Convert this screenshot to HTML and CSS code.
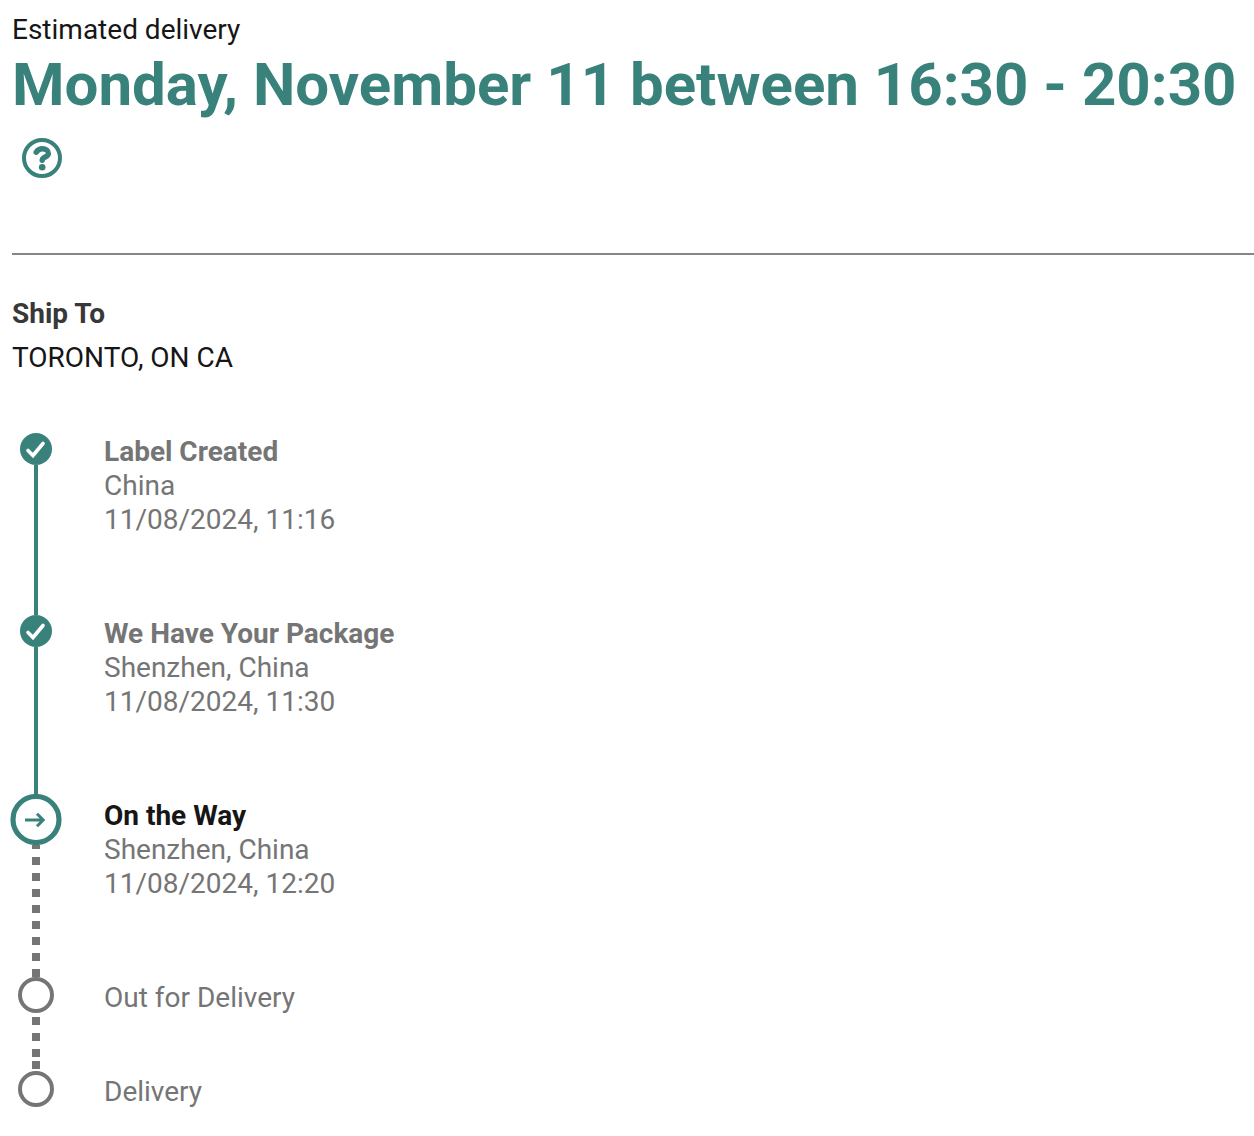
FILE: index.html
```html
<!DOCTYPE html>
<html lang="en">
<head>
<meta charset="utf-8">
<title>Delivery status</title>
<link rel="stylesheet" href="styles.css">
</head>
<body>
<main class="tracking">
  <header class="estimate">
    <p class="estimate-label">Estimated delivery</p>
    <h1 class="estimate-date">Monday, November 11 between 16:30 - 20:30</h1>
    <button class="help" type="button" aria-label="About the delivery estimate">
      <svg viewBox="0 0 40 40" width="40" height="40" aria-hidden="true">
        <circle cx="20" cy="20" r="18" fill="none" stroke="currentColor" stroke-width="4"/>
        <path d="M14.200 14.200C15.600 12 17.600 10.800 20.400 10.800C24 10.800 26.400 12.600 26.400 15.400C26.400 19.200 20.200 18.800 20.200 22.200" fill="none" stroke="currentColor" stroke-width="5.400" stroke-linecap="round"/>
        <circle cx="20.200" cy="29.200" r="3.300" fill="currentColor"/>
      </svg>
    </button>
  </header>
  <section class="ship-to">
    <h2 class="ship-to-title">Ship To</h2>
    <p class="ship-to-place">TORONTO, ON CA</p>
  </section>
  <ol class="steps">
    <li class="step done">
      <div class="rail">
        <svg class="marker" viewBox="0 0 32 32" width="32" height="32" aria-hidden="true"><circle cx="16" cy="16" r="16" fill="currentColor"/><path d="M8 17.500L13 22.500L23 10.500" fill="none" stroke="#fff" stroke-width="3.600" stroke-linecap="round"/></svg>
      </div>
      <div class="details"><h3 class="step-title">Label Created</h3><p>China</p><p>11/08/2024, 11:16</p></div>
    </li>
    <li class="step done">
      <div class="rail">
        <svg class="marker" viewBox="0 0 32 32" width="32" height="32" aria-hidden="true"><circle cx="16" cy="16" r="16" fill="currentColor"/><path d="M8 17.500L13 22.500L23 10.500" fill="none" stroke="#fff" stroke-width="3.600" stroke-linecap="round"/></svg>
      </div>
      <div class="details"><h3 class="step-title">We Have Your Package</h3><p>Shenzhen, China</p><p>11/08/2024, 11:30</p></div>
    </li>
    <li class="step current" aria-current="step">
      <div class="rail">
        <svg class="marker" viewBox="0 0 52 51" width="52" height="51" aria-hidden="true"><circle cx="26" cy="25.500" r="23" fill="#fff" stroke="currentColor" stroke-width="5.200"/><path d="M15 26H33M27 19.800L33.200 26L27 32.200" fill="none" stroke="currentColor" stroke-width="3"/></svg>
      </div>
      <div class="details"><h3 class="step-title">On the Way</h3><p>Shenzhen, China</p><p>11/08/2024, 12:20</p></div>
    </li>
    <li class="step pending">
      <div class="rail">
        <svg class="marker" viewBox="0 0 36 36" width="36" height="36" aria-hidden="true"><circle cx="18" cy="18" r="16" fill="#fff" stroke="currentColor" stroke-width="4"/></svg>
      </div>
      <div class="details"><p>Out for Delivery</p></div>
    </li>
    <li class="step pending">
      <div class="rail">
        <svg class="marker" viewBox="0 0 36 36" width="36" height="36" aria-hidden="true"><circle cx="18" cy="18" r="16" fill="#fff" stroke="currentColor" stroke-width="4"/></svg>
      </div>
      <div class="details"><p>Delivery</p></div>
    </li>
  </ol>
</main>
</body>
</html>
```
FILE: styles.css
```css
* { box-sizing: border-box; }
body, h1, h2, h3, p, ol { margin: 0; padding: 0; }
body { background: #fff; color: #161616; font: 28px/34px Roboto, sans-serif; }
svg { display: block; }
.tracking { padding: 13px 0 28px 12px; }
.estimate { border-bottom: 2px solid #8a8580; padding-bottom: 75px; }
.estimate-date { color: #39827b; font-size: 60px; line-height: 76px; font-weight: 700; }
.help { display: block; margin: 15px 0 0 10px; padding: 0; border: 0; background: none; color: #39827b; }
.ship-to { padding: 42px 0 58px; display: grid; gap: 10px; }
.ship-to-title { font-size: 28px; font-weight: 700; color: #383838; }
.steps { list-style: none; }
.step { display: grid; grid-template-columns: 48px 1fr; column-gap: 44px; min-height: 182px; color: #757575; }
.details { padding-top: 2px; }
.rail { display: flex; flex-direction: column; align-items: center; }
.rail::after { content: ""; flex: 1; }
.marker { flex: none; }
.done .rail { color: #39827b; }
.done .rail::after { width: 4px; background: #39827b; }
.current .rail { color: #39827b; }
.current .marker { margin-top: -3px; }
.current .rail::after {
  width: 8px;
  background: linear-gradient(transparent 6px, #757575 6px 14px, transparent 14px) bottom / 8px 16px repeat-y;
}
.step-title { font-size: 28px; font-weight: 700; }
.current .step-title { color: #161616; }
.pending { min-height: 94px; }
.pending .marker { margin-top: -2px; }
/* three evenly spaced dots, then one close to the next marker */
.pending .rail::after {
  width: 8px;
  background: linear-gradient(
    transparent 4px, #757575 4px 12px,
    transparent 12px 20px, #757575 20px 28px,
    transparent 28px 36px, #757575 36px 44px,
    transparent 44px 48px, #757575 48px 56px,
    transparent 56px);
}
.pending:last-child { min-height: 36px; }
.pending:last-child .rail::after { display: none; }
```
